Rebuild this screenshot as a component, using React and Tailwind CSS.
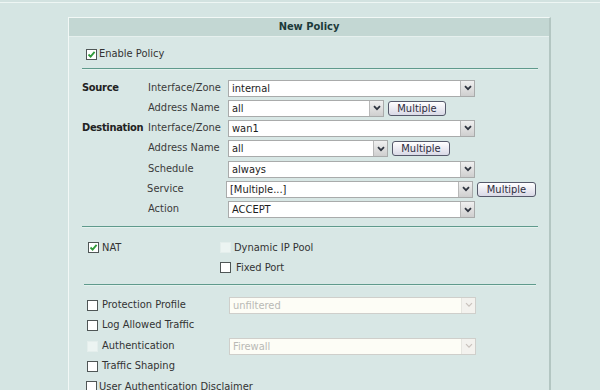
import React from "react";

const FONT = { fontFamily: '"DejaVu Sans Condensed", Tahoma, "Liberation Sans", sans-serif' };

function Chevron({ faint }) {
  return (
    <svg width="8" height="6" viewBox="0 0 8 6">
      <path d="M1 1.2 L4 4.2 L7 1.2" fill="none" stroke={faint ? "#c9c2bc" : "#2f3540"} strokeWidth={faint ? 1.2 : 1.8} />
    </svg>
  );
}

function Select({ w, value, disabled }) {
  return (
    <div
      className={`${w} h-[17px] flex items-stretch border ${disabled ? "border-[#cfcfcb] bg-[#fdfdf6]" : "border-[#a9abab] bg-white"}`}
    >
      <div className={`flex-1 pl-[3px] flex items-center text-[11px] leading-none ${disabled ? "text-[#b9b9b5]" : "text-[#1c1c1c]"}`}>
        {value}
      </div>
      <div
        className={`w-[14px] flex items-center justify-center border-l ${disabled ? "border-[#e6e6e0] bg-[#f3f2ee]" : "border-[#b8b8b8] bg-gradient-to-b from-[#f0f0f0] to-[#cfcfcf]"}`}
      >
        <Chevron faint={disabled} />
      </div>
    </div>
  );
}

function Btn({ w }) {
  return (
    <div
      className={`${w} h-[15px] rounded-[3px] border border-[#55596a] bg-gradient-to-b from-[#ffffff] to-[#d9d9e6] flex items-center justify-center text-[11px] leading-none text-[#2c2c3c]`}
    >
      Multiple
    </div>
  );
}

function Check({ checked, disabled }) {
  if (disabled) {
    return <div className="w-[11px] h-[11px] border border-[#e4eeec] bg-[#ecf4f2]" />;
  }
  return (
    <div className="w-[11px] h-[11px] border border-[#4f5656] bg-white flex items-center justify-center">
      {checked && (
        <svg width="9" height="9" viewBox="0 0 9 9">
          <path d="M1.5 4.5 L3.6 6.6 L7.6 1.8" fill="none" stroke="#2f9a3a" strokeWidth="1.8" />
        </svg>
      )}
    </div>
  );
}

function Rule({ cls }) {
  return (
    <div className={cls}>
      <div className="h-[1px] bg-[#5f9a8c]" />
      <div className="h-[1px] bg-[#e4f2ee]" />
    </div>
  );
}

function Row({ h, bold, label, children }) {
  return (
    <div className={`flex items-center ${h}`}>
      <div className="w-[66px] font-bold text-[#222] tracking-[-0.3px]">{bold}</div>
      <div className="w-[80px] text-[#3a3a3a]">{label}</div>
      <div className="flex items-center">{children}</div>
    </div>
  );
}

export default function App() {
  return (
    <div className="w-[600px] h-[390px] overflow-hidden bg-[#d5e5e3] text-[11px]" style={FONT}>
      <div className="h-[2px] bg-[#d2e2e0]" />
      <div className="h-[1px] bg-[#eef6f4]" />
      <div className="ml-[68px] mt-[14px] w-[483px] border-l border-t border-[#f2f8f6] border-r-[2px] border-r-[#b3c6c2] bg-[#d8e7e5] h-[400px]">
        <div className="h-[19px] bg-[#c3d7d3] flex items-center justify-center font-bold text-[11px] text-[#1c3a3a] border-b border-[#e6f0ee]">
          New Policy
        </div>
        <div className="pl-[13px] pr-[13px]">
          <div className="flex items-center h-[20px] mt-[7px] pl-[4px] gap-[2px]">
            <Check checked />
            <span className="text-[#333]">Enable Policy</span>
          </div>
          <div className="h-[4px]" />
          <Rule cls="w-[456px]" />
          <div className="h-[8px]" />

          <Row h="h-[20px]" bold="Source" label="Interface/Zone">
            <Select w="w-[247px]" value="internal" />
          </Row>
          <Row h="h-[20.3px]" label="Address Name">
            <Select w="w-[156px]" value="all" />
            <div className="w-[4px]" />
            <Btn w="w-[58px]" />
          </Row>
          <Row h="h-[20.3px]" bold="Destination" label="Interface/Zone">
            <Select w="w-[247px]" value="wan1" />
          </Row>
          <Row h="h-[20.3px]" label="Address Name">
            <Select w="w-[160px]" value="all" />
            <div className="w-[4px]" />
            <Btn w="w-[58px]" />
          </Row>
          <Row h="h-[20.3px]" label="Schedule">
            <Select w="w-[247px]" value="always" />
          </Row>
          <Row h="h-[20.3px]" label="Service">
            <Select w="w-[247px]" value="[Multiple...]" />
            <div className="w-[4px]" />
            <Btn w="w-[59px]" />
          </Row>
          <Row h="h-[20.3px]" label="Action">
            <Select w="w-[247px]" value="ACCEPT" />
          </Row>

          <div className="h-[6px]" />
          <Rule cls="w-[456px]" />
          <div className="h-[10px]" />

          <div className="flex items-center h-[20px]">
            <div className="w-[138px] flex items-center pl-[6px] gap-[3px]">
              <Check checked />
              <span className="text-[#333]">NAT</span>
            </div>
            <div className="flex items-center gap-[3px]">
              <Check disabled />
              <span className="text-[#333]">Dynamic IP Pool</span>
            </div>
          </div>
          <div className="flex items-center h-[20px]">
            <div className="w-[138px]" />
            <div className="flex items-center gap-[5px]">
              <Check />
              <span className="text-[#333]">Fixed Port</span>
            </div>
          </div>

          <div className="h-[6px]" />
          <Rule cls="ml-[2px] w-[452px]" />
          <div className="h-[9px]" />

          {[
            { label: "Protection Profile", sel: "unfiltered" },
            { label: "Log Allowed Traffic" },
            { label: "Authentication", sel: "Firewall", dis: true },
            { label: "Traffic Shaping" },
          ].map((r) => (
            <div key={r.label} className="flex items-center h-[20.5px]">
              <div className="w-[147px] flex items-center pl-[5px] gap-[4px]">
                <Check disabled={r.dis} />
                <span className="text-[#333]">{r.label}</span>
              </div>
              {r.sel && <Select w="w-[247px]" value={r.sel} disabled />}
            </div>
          ))}
          <div className="flex items-center h-[20px] pl-[4px] gap-[2px]">
            <Check />
            <span className="text-[#333]">User Authentication Disclaimer</span>
          </div>
        </div>
      </div>
    </div>
  );
}
